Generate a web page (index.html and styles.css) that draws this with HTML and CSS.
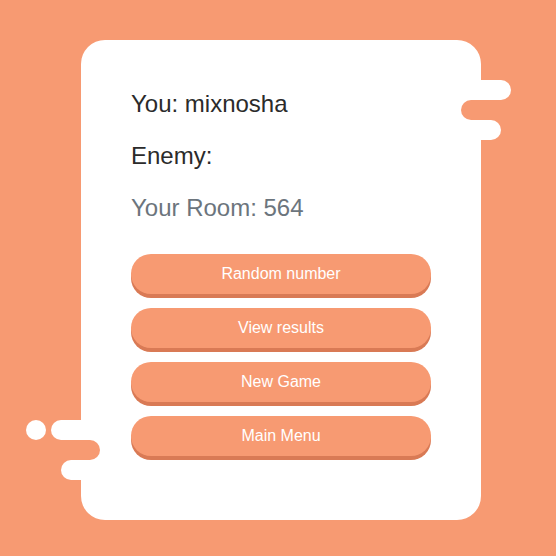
FILE: index.html
```html
<!DOCTYPE html>
<html>
<head>
<meta charset="utf-8">
<link rel="stylesheet" href="styles.css">
</head>
<body>
<div class="stage">
  <div class="card">
    <span class="deco white r1"></span>
    <span class="deco orange r2"></span>
    <span class="deco white r3"></span>
    <span class="deco white dot"></span>
    <span class="deco white l1"></span>
    <span class="deco orange l2"></span>
    <span class="deco white l3"></span>
    <div class="info">
      <p class="line">You: mixnosha</p>
      <p class="line">Enemy:</p>
      <p class="line muted">Your Room: 564</p>
    </div>
    <div class="actions">
      <button class="btn">Random number</button>
      <button class="btn">View results</button>
      <button class="btn">New Game</button>
      <button class="btn">Main Menu</button>
    </div>
  </div>
</div>
</body>
</html>
```
FILE: styles.css
```css
html, body {
  margin: 0;
  padding: 0;
  background: #f79a72;
  font-family: "Liberation Sans", Arial, sans-serif;
}
.stage {
  padding: 40px 0 0 81px;
}
.card {
  position: relative;
  width: 400px;
  height: 480px;
  box-sizing: border-box;
  background: #fff;
  border-radius: 24px;
  padding: 50px 50px 0 50px;
}
.info {
  display: flex;
  flex-direction: column;
  gap: 24px;
}
.line {
  margin: 0;
  font-size: 24px;
  line-height: 28px;
  color: #2b2b2b;
}
.line.muted {
  color: #6c757d;
}
.actions {
  margin-top: 32px;
  display: flex;
  flex-direction: column;
  gap: 14px;
}
.btn {
  display: block;
  width: 300px;
  height: 40px;
  border: none;
  border-radius: 20px;
  background: #f79a72;
  box-shadow: 0 4px 0 #d97a55;
  color: #fff;
  font-family: "Liberation Sans", Arial, sans-serif;
  font-size: 16px;
  padding: 0;
  cursor: pointer;
}
.deco {
  position: absolute;
  height: 20px;
  border-radius: 10px;
}
.deco.white { background: #fff; }
.deco.orange { background: #f79a72; }
.r1 { top: 40px; left: 360px; width: 70px; }
.r2 { top: 60px; left: 380px; width: 120px; }
.r3 { top: 80px; left: 360px; width: 60px; }
.dot { top: 380px; left: -55px; width: 20px; }
.l1 { top: 380px; left: -30px; width: 70px; }
.l2 { top: 400px; left: -120px; width: 139px; }
.l3 { top: 420px; left: -20px; width: 70px; }
```
